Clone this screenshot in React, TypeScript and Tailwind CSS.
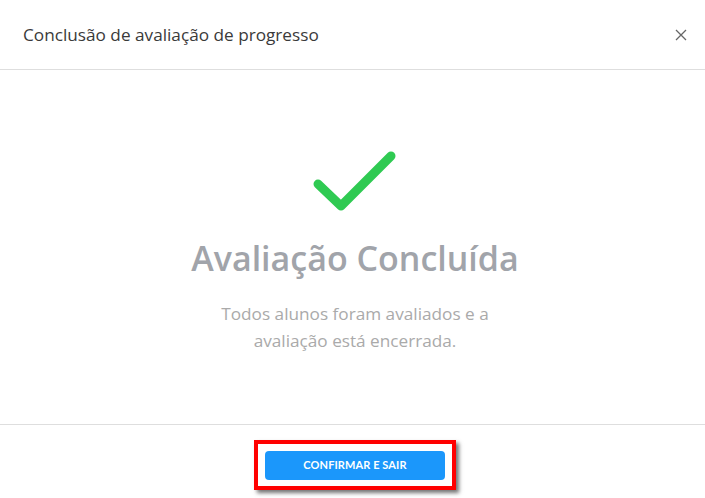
export default function App() {
  return (
    <div className="w-[705px] h-[498px] overflow-hidden bg-white">
      <div className="w-[710px] h-full flex flex-col" style={{ fontFamily: '"Open Sans", sans-serif' }}>
        {/* Header */}
        <div className="h-[70px] shrink-0 flex items-center justify-between pl-[23px] pr-[24px] border-b border-[#dedede]">
          <h2 className="text-[17.2px] text-[#3a3a3a] font-normal">Conclusão de avaliação de progresso</h2>
          <button className="text-[#555] text-[18px] leading-none -mr-[1px]">
            <svg width="12" height="12" viewBox="0 0 12 12" fill="none" stroke="#666" strokeWidth="1.3">
              <path d="M1 1l10 10M11 1L1 11" />
            </svg>
          </button>
        </div>

        {/* Body */}
        <div className="flex-1 flex flex-col items-center pt-[80px]">
          <svg width="90" height="70" viewBox="0 0 90 70" fill="none">
            <path d="M8 34l23 22L81 6" stroke="#2fca52" strokeWidth="9" strokeLinecap="round" strokeLinejoin="round" />
          </svg>
          <h1 className="mt-[15px] text-[34px] leading-[46px] text-[#a1a4aa] font-semibold" style={{ fontFamily: '"Open Sans", sans-serif' }}>
            Avaliação Concluída
          </h1>
          <p className="mt-[19px] w-[300px] text-center text-[17.2px] leading-[27px] text-[#aaaaaa]">
            Todos alunos foram avaliados e a avaliação está encerrada.
          </p>
        </div>

        {/* Footer */}
        <div className="h-[74px] shrink-0 border-t border-[#dedede] flex justify-center pt-[15px]">
          <div className="h-[50px] border-[4px] border-[#ff0000] px-[7px] py-[7px] shadow-[3px_3px_4px_rgba(0,0,0,0.55)]">
            <button className="w-[180px] h-[29px] rounded-[4px] bg-[#1b97fb] text-white text-[11px] font-bold tracking-[0.1px]" style={{ fontFamily: 'Lato, sans-serif' }}>
              CONFIRMAR E SAIR
            </button>
          </div>
        </div>
      </div>
    </div>
  )
}
